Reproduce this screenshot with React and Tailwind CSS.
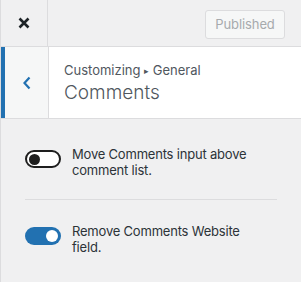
import React from "react";

function Toggle({ on }) {
  return on ? (
    <div className="mt-[4px] flex h-[18px] w-[36px] shrink-0 items-center justify-end rounded-full bg-[#2271b1] pr-[3px]">
      <div className="h-[12px] w-[12px] rounded-full bg-white" />
    </div>
  ) : (
    <div className="mt-[4px] flex h-[18px] w-[36px] shrink-0 items-center rounded-full border-2 border-[#1e1e1e] bg-white pl-[2px]">
      <div className="h-[11px] w-[11px] rounded-full bg-[#1e1e1e]" />
    </div>
  );
}

export default function App() {
  return (
    <div
      className="flex h-[282px] w-[301px] flex-col overflow-hidden border-l border-[#dcdcde] bg-[#f0f0f1]"
      style={{ fontFamily: "Inter, 'Liberation Sans', sans-serif" }}
    >
      {/* top bar */}
      <div className="flex h-[47px] shrink-0 items-center border-b border-[#dcdcde]">
        <div className="flex h-full w-[47px] items-center justify-center border-r border-[#dcdcde]">
          <svg width="12" height="12" viewBox="0 0 12 12">
            <path d="M1.5 1.5 L10.5 10.5 M10.5 1.5 L1.5 10.5" stroke="#1d2327" strokeWidth="2.6" strokeLinecap="butt" />
          </svg>
        </div>
        <div className="flex flex-1 justify-end pr-[16px] pt-[3px]">
          <div className="flex h-[29px] w-[80px] items-center justify-center rounded-[3px] border border-[#dcdcde] bg-[#f6f7f7] text-[13px] tracking-[-0.1px] text-[#a7aaad]">
            Published
          </div>
        </div>
      </div>

      {/* header */}
      <div className="flex h-[72px] shrink-0 border-b border-[#dcdcde] bg-white">
        <div className="flex w-[48px] items-center justify-center border-l-4 border-r border-l-[#2271b1] border-r-[#dcdcde] bg-[#f6f7f7]">
          <svg width="10" height="14" viewBox="0 0 10 14">
            <path d="M7.5 1.5 L2.5 7 L7.5 12.5" fill="none" stroke="#2271b1" strokeWidth="2.2" />
          </svg>
        </div>
        <div className="flex flex-col justify-center pl-[15px] pt-[2px]">
          <div className="text-[13px] leading-[18px] text-[#50575e]">
            Customizing <span className="text-[9px] align-[1px]">▸</span> General
          </div>
          <div className="text-[19px] leading-[26px] font-light text-[#50575e]">Comments</div>
        </div>
      </div>

      {/* content */}
      <div className="flex flex-col px-[24px] pt-[27px]">
        <div className="flex items-start gap-[11px]">
          <Toggle on={false} />
          <div className="w-[182px] text-[13px] tracking-[-0.2px] leading-[16px] text-[#2c3338]">
            Move Comments input above comment list.
          </div>
        </div>
        <div className="mt-[21px] h-px bg-[#dcdcde]" />
        <div className="mt-[23px] flex items-start gap-[11px]">
          <Toggle on={true} />
          <div className="w-[182px] text-[13px] tracking-[-0.2px] leading-[16px] text-[#2c3338]">
            Remove Comments Website field.
          </div>
        </div>
      </div>
    </div>
  );
}
